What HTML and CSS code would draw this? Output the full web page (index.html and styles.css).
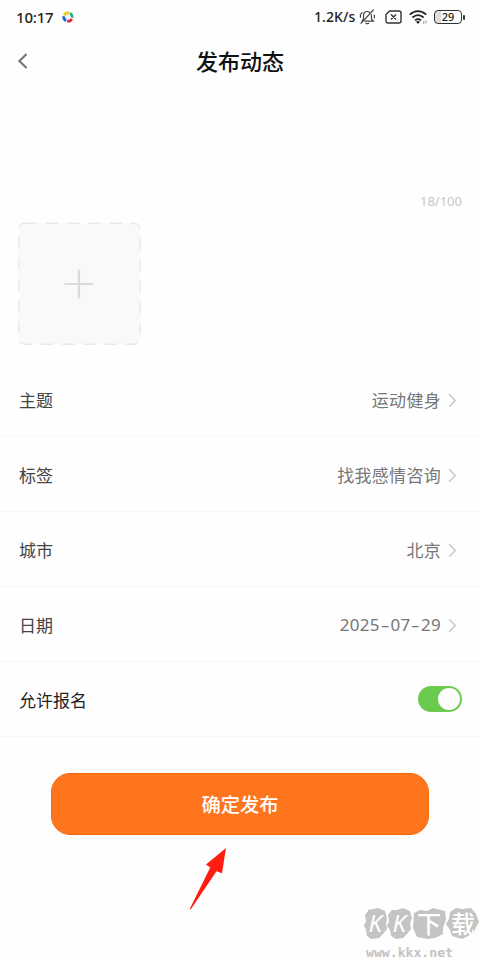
FILE: index.html
```html
<!DOCTYPE html>
<html lang="zh-CN">
<head>
<meta charset="utf-8">
<title>发布动态</title>
<link rel="stylesheet" href="styles.css">
</head>
<body>
<div class="screen">
  <div class="status">
    <span class="clock">10:17</span>
    <svg class="app-dot" width="12" height="12" viewBox="0 0 12 12" fill="none" stroke-width="2.8">
      <path d="M2.1 4.4A4.2 4.2 0 0 1 6 1.8L7.2 2" stroke="#f3c623"/>
      <path d="M8 2.3A4.2 4.2 0 0 1 10.1 6.7" stroke="#20b48c"/>
      <path d="M9.7 7.8A4.2 4.2 0 0 1 5.2 10.1" stroke="#e12643"/>
      <path d="M4.2 9.8A4.2 4.2 0 0 1 1.9 5.2" stroke="#1764d8"/>
    </svg>
    <span class="speed">1.2K/s</span>
    <svg class="bell" width="17" height="16" viewBox="0 0 17 16" fill="none" stroke="#444" stroke-width="1.2" stroke-linecap="round">
      <path d="M3 12.2 4.5 10V6.5C4.5 4 6 2.5 8 2.5c1 0 1.8.3 2.4.8M12.4 5.5l.1 4.5 1.9 2.2H6M7 14.2q1.3.9 2.6 0M14.3 1 2 14.3M1.4 5.3v3M3 3.7l-.7 1M15.4 6v3"/>
    </svg>
    <svg class="sim" width="17" height="14" viewBox="0 0 17 14" fill="none" stroke="#333" stroke-width="1.4">
      <path d="M4.6 1H14a2 2 0 0 1 2 2v8a2 2 0 0 1-2 2H3a2 2 0 0 1-2-2V4.5ZM6 4.5l5 5M11 4.5l-5 5"/>
    </svg>
    <svg class="wifi" width="19" height="16" viewBox="0 0 19 16" fill="none" stroke="#222" stroke-width="1.7">
      <path d="M.8 5.6q8.2-7 16.4 0M3.4 8.5q5.6-4.8 11.2 0M6 11.4q3-2.5 6 0"/>
      <path d="m6.9 12.6 2.1 2.3 2.1-2.3q-2.1-1.4-4.2 0Z" fill="#222" stroke="none"/>
      <path d="M14.8 12v3M17 11.4v3" stroke="#999" stroke-width="1"/>
    </svg>
    <span class="battery"><span class="level">29</span></span>
    <span class="battery-tip"></span>
  </div>

  <div class="header">
    <svg class="back" width="12" height="18" viewBox="0 0 12 18" fill="none" stroke="#777" stroke-width="2.2"><path d="M9.6 2 2.4 9l7.2 7"/></svg>
    <h1>发布动态</h1>
  </div>

  <div class="editor"><div class="draft"></div><div class="count">18/100</div></div>

  <div class="upload">
    <svg width="123" height="123" viewBox="0 0 123 123" fill="none">
      <rect x=".75" y="1.25" width="121.5" height="121" rx="6" fill="#f9f9f9" stroke="#e8e8e8" stroke-width="1.3" stroke-dasharray="12 9.2"/>
      <path d="M46.5 62h28.5M61 47.7v28.6" stroke="#dadada" stroke-width="2.2"/>
    </svg>
  </div>

  <div class="rows">
    <div class="row"><span class="label">主题</span><span class="value">运动健身</span><svg class="chev" width="9" height="15" viewBox="0 0 9 15"><path d="m1.2 1.2 6 6.3-6 6.3"/></svg></div>
    <div class="row"><span class="label">标签</span><span class="value">找我感情咨询</span><svg class="chev" width="9" height="15" viewBox="0 0 9 15"><path d="m1.2 1.2 6 6.3-6 6.3"/></svg></div>
    <div class="row"><span class="label">城市</span><span class="value">北京</span><svg class="chev" width="9" height="15" viewBox="0 0 9 15"><path d="m1.2 1.2 6 6.3-6 6.3"/></svg></div>
    <div class="row"><span class="label">日期</span><span class="value date">2025<i>-</i>07<i>-</i>29</span><svg class="chev" width="9" height="15" viewBox="0 0 9 15"><path d="m1.2 1.2 6 6.3-6 6.3"/></svg></div>
    <div class="row"><span class="label dark">允许报名</span><span class="switch"><span class="knob"></span></span></div>
  </div>

  <button class="submit">确定发布</button>

  <svg class="pointer" width="40" height="66" viewBox="0 0 40 66"><path d="M37 2 17 18.5l4.2 3L1 62.5q-.2 1.6 1 .5L27.5 25.3l5.5 2Z" fill="#ff1c10"/></svg>

  <svg class="mark" width="120" height="55" viewBox="0 0 120 55">
    <g fill="#c4c4c4">
      <path d="m8 5 5-1 5-1 7 3 2 7-1 5 1 6-4 5-4 4-8 1-4-3-1-6-2-4 2-5-1-6 3-4Z"/>
      <path d="m32 5 5 0 6-2 7 3 2 7-2 5 1 6-4 5-4 4-7 1-5-3-1-6-3-4 2-5-1-6 3-4Z"/>
      <path d="m54 8 6-3 7 1 6-3 12 3 1 8-3 9 0 6-8 4-8 1-10-2-4-9Z"/>
      <path d="m90 7 6-4 7 1 8-1 5 6 3 8-3 5-2 6-6 3-6 3-10-3-2-6-4-6 3-5Z"/>
    </g>
    <g class="mark-name">
      <text x="8.5" y="26.5" class="latin">K</text>
      <text x="32.5" y="26.5" class="latin">K</text>
      <text x="57" y="27.5">下</text>
      <text x="91" y="27.5">载</text>
    </g>
    <text class="mark-url" x="6" y="52" textLength="87" lengthAdjust="spacingAndGlyphs">www.kkx.net</text>
  </svg>
</div>
</body>
</html>
```
FILE: styles.css
```css
* { box-sizing: border-box; }
body { margin: 0; background: #fefefe; font-family: "Noto Sans CJK SC", sans-serif; }
.screen { position: relative; width: 480px; height: 960px; overflow: hidden; background: #fefefe; }

.status { display: flex; align-items: center; height: 34px; padding: 0 15px 0 16px; color: #222; font-family: "Noto Sans", sans-serif; }
.clock { width: 46px; font-size: 15px; line-height: 20px; font-weight: 500; letter-spacing: -0.2px; }
.speed { width: 45px; margin-left: 240px; font-size: 14px; line-height: 20px; font-weight: 500; white-space: nowrap; letter-spacing: 0.1px; }
.sim { margin-left: 9px; }
.wifi { margin-left: 7px; }
.battery { display: flex; align-items: center; justify-content: center; width: 28px; height: 14px; margin-left: 6px; border: 1.5px solid #333; border-radius: 4px; background: linear-gradient(90deg, #ddd 6px, transparent 6px); }
.level { font-size: 11px; line-height: 12px; font-weight: 500; }
.battery-tip { width: 2px; height: 5px; margin-left: 1px; background: #333; border-radius: 1px; }

.header { display: grid; grid-template-columns: 1fr auto 1fr; align-items: center; height: 52px; padding: 0 17px; }
.header h1 { margin: 0; font-size: 22px; line-height: 32px; font-weight: 500; color: #111; }
.back { margin-top: 1px; }

.editor { display: flex; flex-direction: column; justify-content: space-between; height: 124px; }
.draft { width: 150px; height: 98px; margin-top: -8px; border-radius: 40px; background: #fdfdfd; }
.count { padding-right: 18px; text-align: right; font-family: "Noto Sans", sans-serif; font-size: 13px; line-height: 18px; color: #c6c6c6; }

.upload { height: 123px; margin: 12px 0 17px 18px; }
.upload svg { display: block; }

.row { display: flex; align-items: center; height: 75px; padding: 2px 18px 0 19px; border-bottom: 1px solid #f6f6f6; font-size: 17px; line-height: 26px; }
.label { flex: 1; margin-top: -1px; color: #444; }
.label.dark { color: #222; }
.value { margin-top: -1px; color: #777; letter-spacing: 0.3px; }
.date { font-family: "Noto Sans", sans-serif; letter-spacing: 0.3px; }
.date i { display: inline-block; width: 10.5px; font-style: normal; text-align: center; transform: scaleX(1.6); letter-spacing: 0; }
.chev { margin: 0 5px 0 7px; fill: none; stroke: #c9c9c9; stroke-width: 1.6; }
.switch { display: flex; justify-content: flex-end; align-items: center; width: 44px; height: 26px; margin-top: -2px; padding: 2px; border-radius: 13px; background: #6bcb4e; }
.knob { width: 22px; height: 22px; border-radius: 50%; background: #fefefe; }

.submit { display: block; width: 378px; height: 62px; margin: 36px 0 0 51px; padding: 0; border: 1px solid #f56a0d; border-radius: 19px; background: #ff751d; color: #fff; font: 500 19.3px "Noto Sans CJK SC", sans-serif; }

.pointer { position: absolute; left: 189px; top: 846px; }
.mark { position: absolute; left: 360px; top: 905px; }
.mark-name { fill: #fff; font: 500 24px "Noto Sans CJK SC", sans-serif; }
.latin { font: italic 24px "Noto Sans", sans-serif; }
.mark-url { fill: #c3c3c3; font: bold 12px "DejaVu Sans Mono", monospace; }
```
